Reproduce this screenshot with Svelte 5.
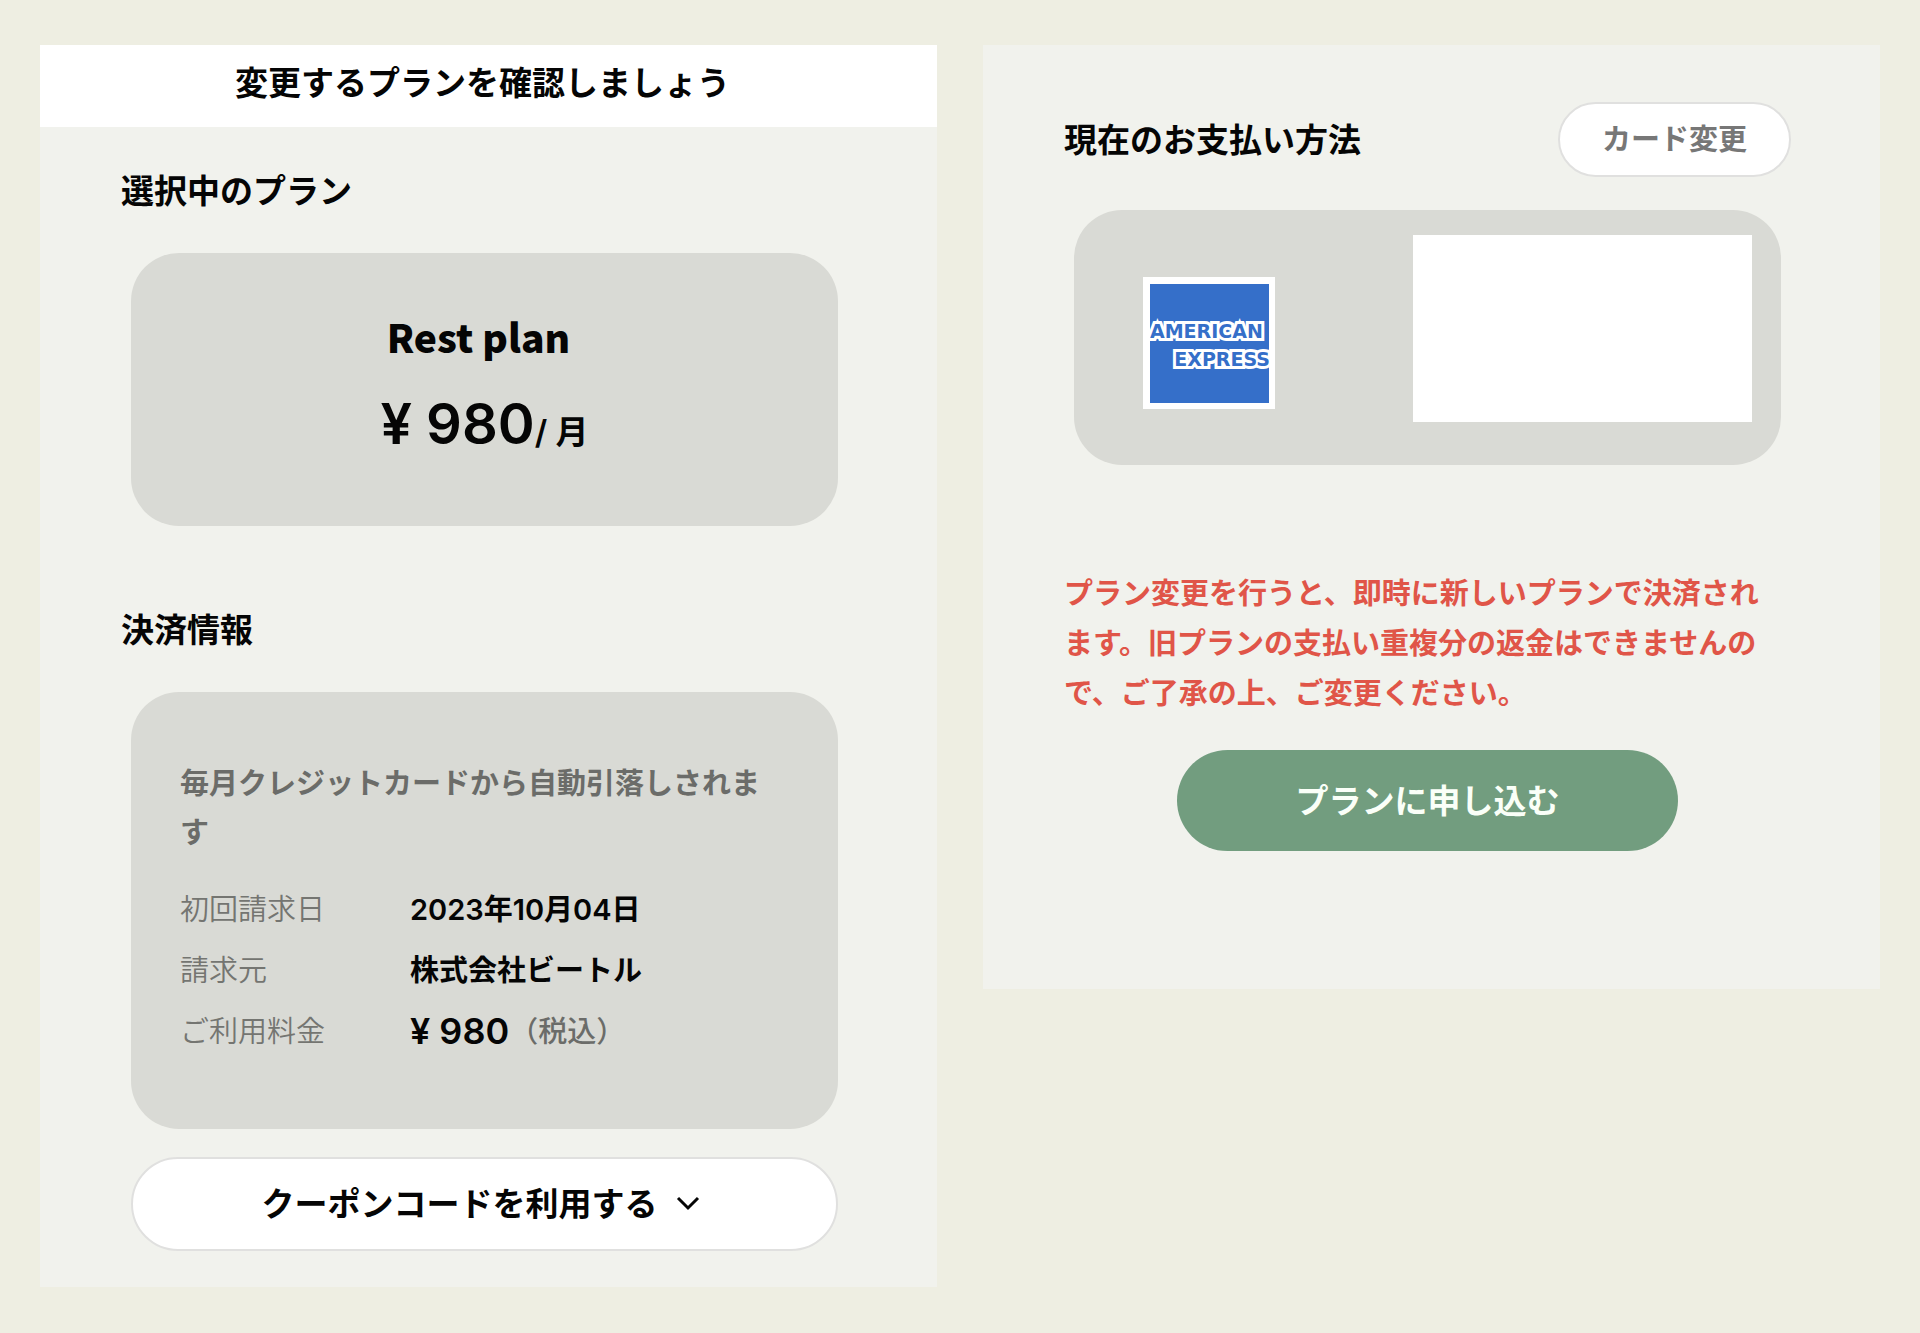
<script>
  const billing = [
    { label: '初回請求日', value: '2023年10月04日' },
    { label: '請求元', value: '株式会社ビートル' },
    { label: 'ご利用料金', value: '¥ 980', note: '（税込）' }
  ];
</script>

<main class="page">
  <section class="panel">
    <h1 class="title">変更するプランを確認しましょう</h1>
    <div class="body">
      <h2 class="heading">選択中のプラン</h2>
      <div class="card plan">
        <p class="plan-name">Rest plan</p>
        <p class="plan-price"><span class="amount">¥ 980</span>/ 月</p>
      </div>

      <h2 class="heading second">決済情報</h2>
      <div class="card billing">
        <p class="lead">毎月クレジットカードから自動引落しされます</p>
        <dl class="rows">
          {#each billing as row}
            <div class="row">
              <dt>{row.label}</dt>
              <dd>
                <span class:fee={row.note}>{row.value}</span>{#if row.note}<span class="note">{row.note}</span>{/if}
              </dd>
            </div>
          {/each}
        </dl>
      </div>

      <button class="coupon" type="button">
        クーポンコードを利用する
        <svg class="chevron" viewBox="0 0 24 16" aria-hidden="true">
          <path d="M2 2l10 10L22 2" fill="none" stroke="currentColor" stroke-width="3" />
        </svg>
      </button>
    </div>
  </section>

  <section class="panel">
    <div class="body payment">
      <div class="payment-head">
        <h2 class="heading">現在のお支払い方法</h2>
        <button class="change" type="button">カード変更</button>
      </div>
      <div class="card method">
        <svg class="brand" viewBox="0 0 132 132" role="img" aria-label="American Express">
          <rect width="132" height="132" fill="#fff" />
          <svg x="7" y="7" width="119" height="119" viewBox="0 0 119 119">
            <rect width="119" height="119" fill="#356fc9" />
            <g class="brand-text">
              <text x="0" y="54">AMERICAN</text>
              <text x="120" y="82" text-anchor="end">EXPRESS</text>
            </g>
          </svg>
        </svg>
        <div class="blank"></div>
      </div>

      <p class="warning">
        プラン変更を行うと、即時に新しいプランで決済されます。旧プランの支払い重複分の返金はできませんので、ご了承の上、ご変更ください。
      </p>
      <button class="apply" type="button">プランに申し込む</button>
    </div>
  </section>
</main>

<style>
  :global(body) {
    margin: 0;
    background: #eeeee2;
  }

  .page {
    display: flex;
    align-items: flex-start;
    gap: 46px;
    padding: 45px 40px;
    color: #050505;
    font-family: Inter, 'Noto Sans CJK JP', sans-serif;
    font-size: 29px;
    font-weight: 600;
    line-height: 49px;
  }

  h1,
  h2,
  p,
  dl,
  dd {
    margin: 0;
  }

  button {
    box-sizing: border-box;
    font: inherit;
    cursor: pointer;
  }

  .panel {
    flex: 1;
    min-width: 0;
    background: #f1f2ed;
  }

  .title {
    padding: 14px 12px 20px 0;
    background: #fff;
    font-size: 33px;
    font-weight: 600;
    line-height: 48px;
    text-align: center;
  }

  .body {
    padding: 40px 99px 36px 91px;
  }

  .heading {
    margin-left: -10px;
    font-size: 33px;
    font-weight: 600;
    line-height: 48px;
  }

  .heading.second {
    margin-top: 80px;
  }

  .card {
    border-radius: 48px;
    background: #d9dad5;
  }

  .plan {
    margin-top: 38px;
    padding: 53px 12px 58px 0;
    text-align: center;
  }

  .plan-name {
    font-family: 'Noto Sans CJK JP', sans-serif;
    font-size: 39px;
    font-weight: 900;
    line-height: 60px;
  }

  .plan-price {
    margin-top: 22px;
    padding-left: 12px;
    font-size: 33px;
    line-height: 72px;
  }

  .amount {
    font-size: 56px;
  }

  .billing {
    margin-top: 38px;
    padding: 67px 49px;
  }

  .lead {
    padding-right: 16px;
    color: #6b6c69;
  }

  .rows {
    margin-top: 22px;
  }

  .row {
    display: flex;
    height: 61px;
    align-items: center;
  }

  dt {
    width: 230px;
    color: #747571;
    font-weight: 350;
  }

  dd {
    display: flex;
    align-items: center;
  }

  .fee {
    font-size: 36px;
  }

  .note {
    color: #6b6c69;
    font-weight: 500;
  }

  .coupon {
    display: flex;
    align-items: center;
    justify-content: center;
    gap: 18px;
    width: 100%;
    margin-top: 28px;
    padding: 20px 8px 20px 0;
    border: 2px solid #e0e0df;
    border-radius: 48px;
    background: #fff;
    color: #050505;
    font-size: 33px;
    line-height: 50px;
  }

  .chevron {
    width: 24px;
    height: 16px;
  }

  .payment {
    padding-top: 57px;
    padding-bottom: 138px;
  }

  .payment-head {
    display: flex;
    align-items: center;
    justify-content: space-between;
    margin-right: -10px;
  }

  .change {
    padding: 11px 42px;
    border: 2px solid #e0e0df;
    border-radius: 48px;
    background: #fff;
    color: #777;
  }

  .method {
    display: flex;
    align-items: center;
    justify-content: space-between;
    margin-top: 33px;
    padding: 25px 29px 43px 69px;
  }

  .brand {
    width: 132px;
    height: 132px;
    margin-top: 28px;
  }

  .brand-text {
    fill: #356fc9;
    stroke: #fff;
    stroke-width: 6px;
    paint-order: stroke;
    font-family: 'DejaVu Sans', sans-serif;
    font-size: 19px;
    font-weight: 700;
  }

  .blank {
    width: 339px;
    height: 187px;
    background: #fff;
  }

  .warning {
    margin-top: 104px;
    margin-left: -10px;
    color: #e05548;
    line-height: 50px;
  }

  .apply {
    display: block;
    width: 71%;
    margin: 31px auto 0;
    padding: 26px 0 24px;
    border: 0;
    border-radius: 51px;
    background: #729d7f;
    color: #fafff8;
    font-size: 33px;
    line-height: 51px;
  }
</style>
